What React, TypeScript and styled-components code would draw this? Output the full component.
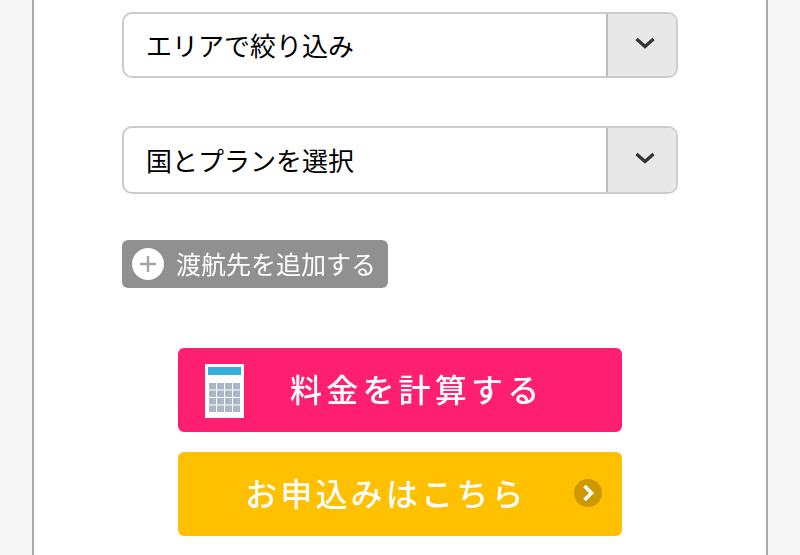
import React from "react";
import styled, { createGlobalStyle } from "styled-components";

const GlobalStyle = createGlobalStyle`
  html, body {
    margin: 0;
    padding: 0;
    height: 555px;
    overflow: hidden;
    background: #f7f7f7;
  }
  * {
    box-sizing: border-box;
  }
`;

const Page = styled.div`
  width: 800px;
  height: 555px;
  padding: 0 32px;
  font-family: "Noto Sans CJK JP", "Noto Sans", sans-serif;
`;

const Panel = styled.main`
  height: 555px;
  background: #fff;
  border-left: 2px solid #aaa;
  border-right: 2px solid #aaa;
  padding: 12px 88px 0;
  display: flex;
  flex-direction: column;
`;

const SelectBox = styled.div<{ $height: number; $mb: number }>`
  height: ${({ $height }) => $height}px;
  margin-bottom: ${({ $mb }) => $mb}px;
  border: 2px solid #ccc;
  border-radius: 10px;
  display: flex;
  overflow: hidden;
`;

const SelectLabel = styled.div`
  flex: 1;
  padding: 0 0 2px 22px;
  display: flex;
  align-items: center;
  font-size: 26px;
  color: #000;
`;

const SelectArrow = styled.div`
  width: 70px;
  padding: 0 0 4px 6px;
  background: #e8e8e8;
  border-left: 2px solid #bbb;
  display: flex;
  align-items: center;
  justify-content: center;
`;

const AddButton = styled.div`
  align-self: flex-start;
  width: 266px;
  height: 48px;
  margin-bottom: 60px;
  padding: 0 0 2px 10px;
  background: #909090;
  border-radius: 6px;
  display: flex;
  align-items: center;
  gap: 12px;
  color: #fff;
  font-size: 25px;
  white-space: nowrap;
`;

const AddText = styled.span`
  filter: blur(0.5px);
`;

const PlusCircle = styled.span`
  width: 32px;
  height: 32px;
  margin-top: 2px;
  border-radius: 50%;
  background: #fff;
  display: flex;
  align-items: center;
  justify-content: center;
  flex: none;
  filter: blur(0.5px);
`;

const ActionList = styled.div`
  display: flex;
  flex-direction: column;
  gap: 20px;
  padding: 0 56px;
`;

const ActionButton = styled.div<{ $bg: string }>`
  position: relative;
  height: 84px;
  padding-bottom: 4px;
  background: ${({ $bg }) => $bg};
  border-radius: 6px;
  display: flex;
  align-items: center;
  color: #fff;
  font-weight: 500;
  font-size: 32px;
  white-space: nowrap;
`;

const ActionText = styled.span<{ $left: number; $spacing: number }>`
  margin-left: ${({ $left }) => $left}px;
  letter-spacing: ${({ $spacing }) => $spacing}px;
  filter: blur(0.6px);
`;

const CalcIcon = styled.svg`
  position: absolute;
  left: 27px;
  top: 16px;
  filter: blur(0.4px);
`;

const NextIcon = styled.svg`
  position: absolute;
  right: 20px;
  top: 27px;
  filter: blur(0.3px);
`;

const Chevron = () => (
  <svg width="22" height="14" viewBox="0 0 22 14">
    <path d="M2.5 3 L11 10.5 L19.5 3" fill="none" stroke="#333" strokeWidth="3.2" />
  </svg>
);

const cells: number[][] = [];
for (let r = 0; r < 4; r++) {
  for (let c = 0; c < 4; c++) cells.push([r, c]);
}

const App = () => (
  <>
    <GlobalStyle />
    <Page>
      <Panel>
        <SelectBox $height={66} $mb={48}>
          <SelectLabel>エリアで絞り込み</SelectLabel>
          <SelectArrow>
            <Chevron />
          </SelectArrow>
        </SelectBox>
        <SelectBox $height={68} $mb={46}>
          <SelectLabel>国とプランを選択</SelectLabel>
          <SelectArrow>
            <Chevron />
          </SelectArrow>
        </SelectBox>
        <AddButton>
          <PlusCircle>
            <svg width="18" height="18" viewBox="0 0 18 18">
              <path d="M9 1 V17 M1 9 H17" stroke="#a5a5a5" strokeWidth="2.4" />
            </svg>
          </PlusCircle>
          <AddText>渡航先を追加する</AddText>
        </AddButton>
        <ActionList>
          <ActionButton $bg="#ff1f70">
            <CalcIcon width="39" height="54" viewBox="0 0 39 54">
              <rect width="39" height="54" fill="#fff" />
              <rect x="3" y="3" width="33" height="8" fill="#35aede" />
              {cells.map(([r, c]) => (
                <rect
                  key={`${r}-${c}`}
                  x={4 + c * 8}
                  y={19 + r * 7.5}
                  width="7"
                  height="6.5"
                  fill="#a9b6c6"
                />
              ))}
            </CalcIcon>
            <ActionText $left={112} $spacing={4.2}>料金を計算する</ActionText>
          </ActionButton>
          <ActionButton $bg="#ffc000">
            <ActionText $left={67} $spacing={3.2}>お申込みはこちら</ActionText>
            <NextIcon width="28" height="28" viewBox="0 0 28 28">
              <circle cx="14" cy="14" r="14" fill="#cc9a00" />
              <path d="M10.5 7 L17.5 14 L10.5 21" fill="none" stroke="#fff" strokeWidth="3.6" />
            </NextIcon>
          </ActionButton>
        </ActionList>
      </Panel>
    </Page>
  </>
);

export default App;
